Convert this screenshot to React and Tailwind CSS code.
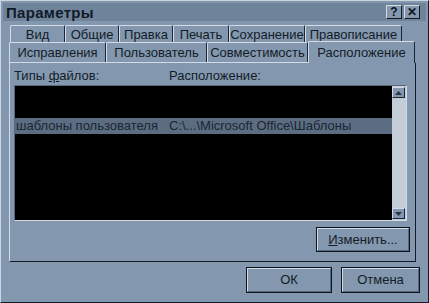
import React from 'react';

const font = { fontFamily: '"Liberation Sans", Arial, sans-serif' };

const row1 = [
  { label: 'Вид', w: 'w-[55px]' },
  { label: 'Общие', w: 'w-[54px]' },
  { label: 'Правка', w: 'w-[54px]' },
  { label: 'Печать', w: 'w-[56px]' },
  { label: 'Сохранение', w: 'w-[76px]' },
  { label: 'Правописание', w: 'w-[97px]' },
];

const row2 = [
  { label: 'Исправления', w: 'w-[97px]' },
  { label: 'Пользователь', w: 'w-[101px]' },
  { label: 'Совместимость', w: 'w-[101px]' },
];

const Tab = ({ label, w }) => (
  <div
    className={`${w} h-full shrink-0 flex items-center justify-center border-l border-t border-r border-l-[#d3dce6] border-t-[#d3dce6] border-r-[#1c2534] rounded-t-[2px] text-[13px] text-[#141c28] leading-none`}
  >
    {label}
  </div>
);

const Button = ({ children, className = '' }) => (
  <div className={`border border-[#0e141e] ${className}`}>
    <div className="w-full h-full border-l border-t border-l-[#d3dce6] border-t-[#d3dce6] border-r border-b border-r-[#56687c] border-b-[#56687c] flex items-center justify-center text-[13px] text-[#141c28]">
      {children}
    </div>
  </div>
);

const TitleBtn = ({ children }) => (
  <div className="w-[16px] h-[14px] bg-[#8599ae] border-l border-t border-l-[#d3dce6] border-t-[#d3dce6] border-r border-b border-r-[#141c28] border-b-[#141c28] flex items-center justify-center text-[12px] font-bold text-[#0e141e] leading-none">
    {children}
  </div>
);

export default function App() {
  return (
    <div
      style={font}
      className="w-[429px] h-[303px] bg-[#8398ae] border-l border-t border-l-[#cbd5e0] border-t-[#cbd5e0] border-r border-b border-r-[#141c28] border-b-[#141c28] flex flex-col overflow-hidden"
    >
      {/* title bar */}
      <div className="mx-[2px] mt-[2px] h-[18px] bg-[#6f849b] flex items-center justify-between pl-[3px] pr-[6px]">
        <span className="text-[15px] font-bold text-[#111a27] leading-none tracking-[0.3px]">Параметры</span>
        <div className="flex gap-[2px]">
          <TitleBtn>?</TitleBtn>
          <TitleBtn>✕</TitleBtn>
        </div>
      </div>

      {/* tabs */}
      <div className="mt-[4px] pl-[8px] flex flex-col">
        <div className="h-[17px] flex pl-[1px]">
          {row1.map((t) => (
            <Tab key={t.label} {...t} />
          ))}
        </div>
        <div className="h-[20px] flex items-end">
          {row2.map((t) => (
            <Tab key={t.label} {...t} />
          ))}
          <div className="w-[107px] h-[22px] -mb-px relative z-10 bg-[#8398ae] flex items-center justify-center border-l border-t border-r border-l-[#d3dce6] border-t-[#d3dce6] border-r-[#1c2534] rounded-t-[2px] text-[13px] text-[#141c28] leading-none">
            Расположение
          </div>
        </div>
      </div>

      {/* panel */}
      <div className="ml-[8px] w-[407px] h-[200px] border-l border-t border-l-[#d3dce6] border-t-[#d3dce6] border-r border-b border-r-[#141c28] border-b-[#141c28] flex flex-col px-[4px]">
        <div className="h-[22px] pt-[3px] flex items-center text-[13px] text-[#141c28]">
          <span className="w-[155px]">
            Типы <span className="underline">ф</span>айлов:
          </span>
          <span>Расположение:</span>
        </div>
        <div className="w-[393px] h-[136px] border-l border-t border-l-[#56687c] border-t-[#56687c] border-r border-b border-r-[#d3dce6] border-b-[#d3dce6] bg-black flex">
          <div className="flex-1 flex flex-col pt-[32px]">
            <div className="h-[16px] bg-[#5c6d81] flex items-center text-[13px] text-[#1b2635] pl-[1px]">
              <span className="w-[153px]">шаблоны пользователя</span>
              <span>C:\...\Microsoft Office\Шаблоны</span>
            </div>
          </div>
          <div className="w-[14px] bg-[#c3ccd7] flex flex-col justify-between py-[1px] pr-[1px]">
            <div className="h-[11px] bg-[#8398ae] border-l border-t border-l-[#d3dce6] border-t-[#d3dce6] border-r border-b border-r-[#1c2534] border-b-[#1c2534] flex items-center justify-center">
              <svg width="7" height="4" viewBox="0 0 7 4"><path d="M0 4 L3.5 0 L7 4 Z" fill="#2a3444" /></svg>
            </div>
            <div className="h-[11px] bg-[#8398ae] border-l border-t border-l-[#d3dce6] border-t-[#d3dce6] border-r border-b border-r-[#1c2534] border-b-[#1c2534] flex items-center justify-center">
              <svg width="7" height="4" viewBox="0 0 7 4"><path d="M0 0 L3.5 4 L7 0 Z" fill="#2a3444" /></svg>
            </div>
          </div>
        </div>
        <div className="flex justify-end pr-[1px] mt-[6px]">
          <Button className="w-[94px] h-[25px]">
            <span>
              <span className="underline">И</span>зменить...
            </span>
          </Button>
        </div>
      </div>

      {/* bottom buttons */}
      <div className="flex justify-end gap-[9px] pr-[8px] mt-[5px]">
        <Button className="w-[86px] h-[26px]">ОК</Button>
        <Button className="w-[79px] h-[26px]">Отмена</Button>
      </div>
    </div>
  );
}
